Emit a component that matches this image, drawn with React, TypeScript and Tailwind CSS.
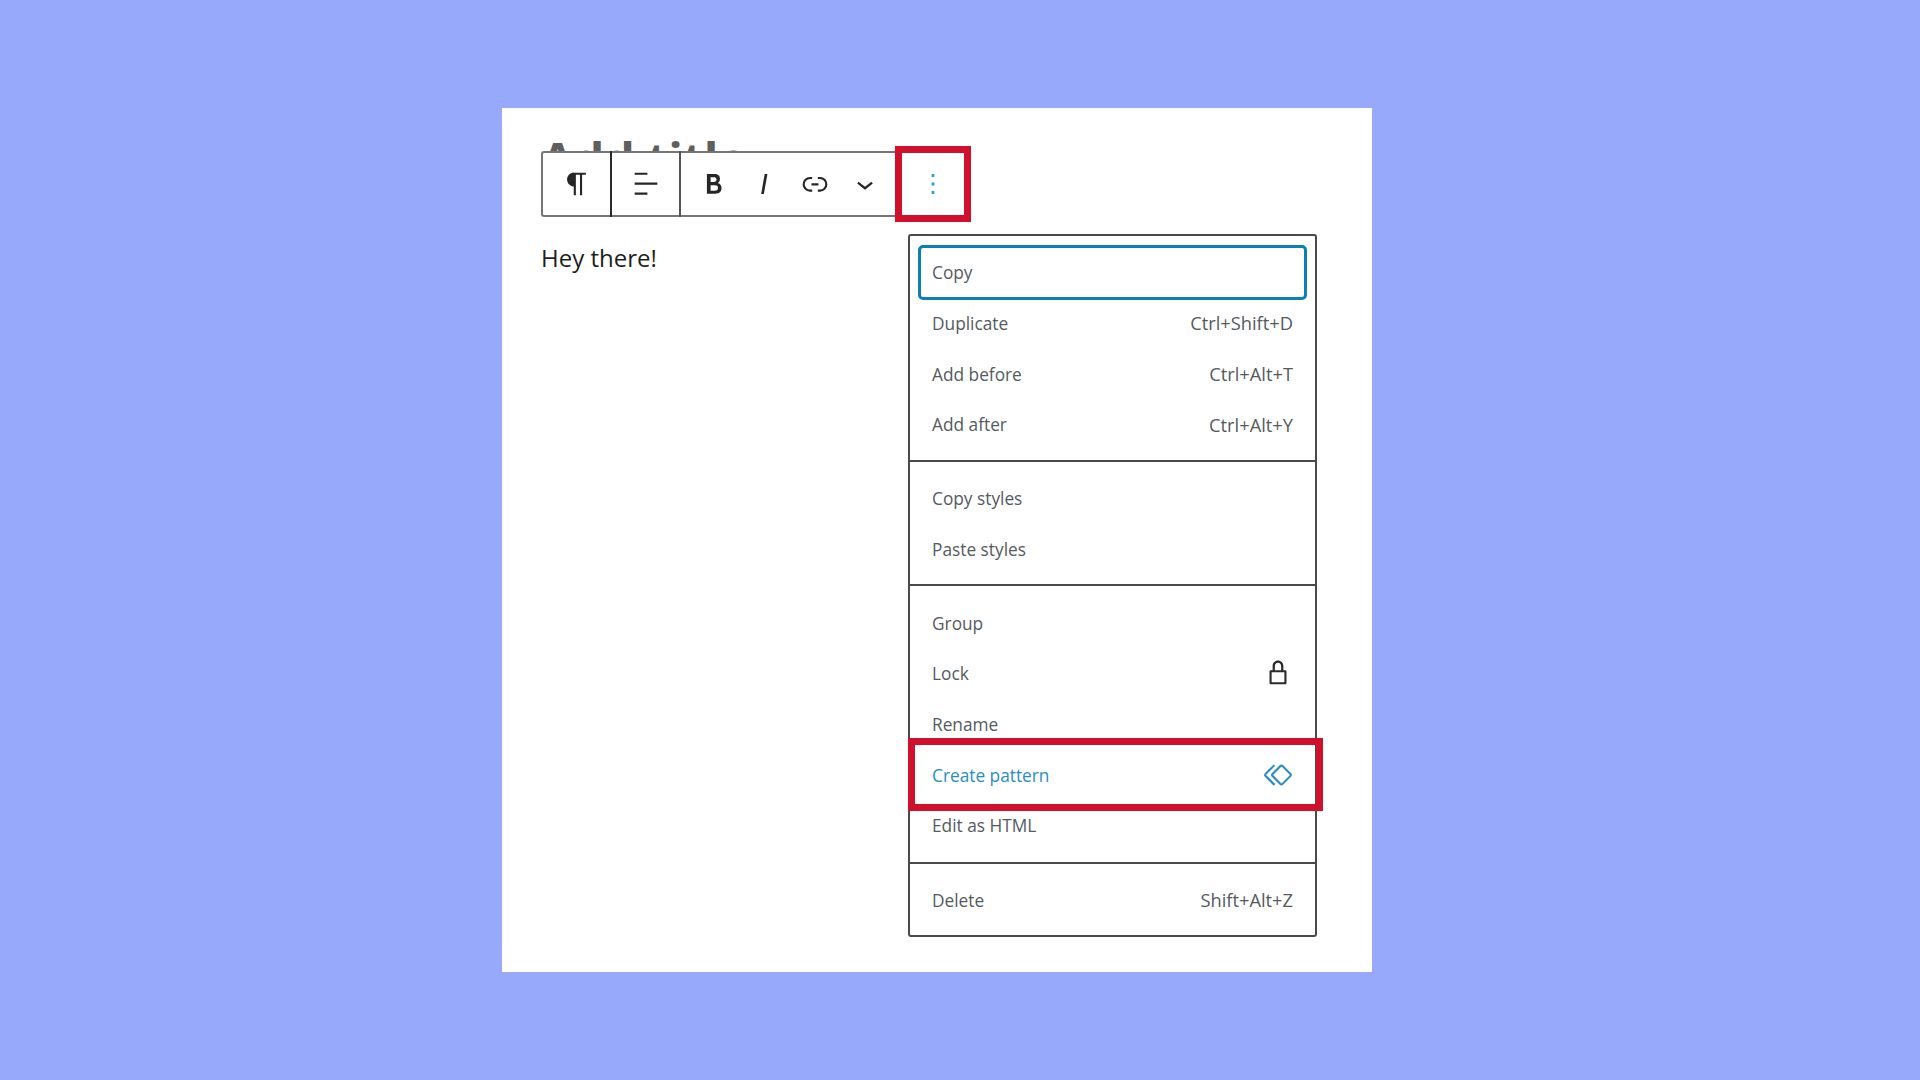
const P = ({ d, className }: { d: string; className: string }) => (
  <svg viewBox="0 0 24 24" className={className} fill="currentColor">
    <path d={d} />
  </svg>
);

const icons = {
  para: "M18.3 4H9.9v-.1l-.9.2c-2.3.4-4 2.4-4 4.8s1.7 4.4 4 4.8l.7.1V20h1.5V5.5h2.9V20h1.5V5.5h2.7V4z",
  align: "M13 5.5H4V4h9v1.5Zm7 7H4V11h16v1.5Zm-7 7H4V18h9v1.5Z",
  bold: "M14.7 11.3c1-.6 1.5-1.6 1.5-3 0-2.3-1.3-3.4-4-3.4H7v14h5.8c1.4 0 2.5-.3 3.3-1 .8-.7 1.2-1.7 1.2-2.9.1-1.9-.8-3.1-2.6-3.7zm-5.1-4h2.3c.6 0 1.1.1 1.4.4.3.3.5.7.5 1.2s-.2 1-.5 1.2c-.3.3-.8.4-1.4.4H9.6V7.3zm4.6 9c-.4.3-1 .4-1.7.4H9.6v-3.9h2.9c.7 0 1.3.2 1.7.5.4.3.6.8.6 1.5s-.2 1.2-.6 1.5z",
  italic: "M12.5 5L10 19h1.9l2.5-14z",
  link: "M10 17.389H8.444A5.194 5.194 0 1 1 8.444 7H10v1.5H8.444a3.694 3.694 0 0 0 0 7.389H10v1.5ZM14 7h1.556a5.194 5.194 0 0 1 0 10.39H14v-1.5h1.556a3.694 3.694 0 0 0 0-7.39H14V7Zm-4.5 6h5v-1.5h-5V13Z",
  chevron: "M17.5 11.6L12 16l-5.5-4.4.9-1.2L12 14l4.5-3.6 1 1.2z",
  more: "M13 19h-2v-2h2v2zm0-6h-2v-2h2v2zm0-6h-2V5h2v2z",
  lock: "M17 10h-1.2V7c0-2.1-1.7-3.8-3.8-3.8-2.1 0-3.8 1.7-3.8 3.8v3H7c-.6 0-1 .4-1 1v8c0 .6.4 1 1 1h10c.6 0 1-.4 1-1v-8c0-.6-.4-1-1-1zM9.8 7c0-1.2 1-2.2 2.2-2.2 1.2 0 2.2 1 2.2 2.2v3H9.8V7zm6.7 11.5h-9v-7h9v7z",
  symbol: "M21.3 10.8l-5.6-5.6c-.7-.7-1.8-.7-2.5 0l-5.6 5.6c-.7.7-.7 1.8 0 2.5l5.6 5.6c.3.3.8.5 1.2.5s.9-.2 1.2-.5l5.6-5.6c.8-.7.8-1.9.1-2.5zm-1 1.4l-5.6 5.6c-.1.1-.3.1-.4 0l-5.6-5.6c-.1-.1-.1-.3 0-.4l5.6-5.6s.1-.1.2-.1.1 0 .2.1l5.6 5.6c.1.1.1.3 0 .4zm-16.6-.4L10 5.5l-1-1-6.3 6.3c-.7.7-.7 1.8 0 2.5L9 19.5l1.1-1.1-6.3-6.3c-.2 0-.2-.2-.1-.3z",
};

const Row = ({ label, hint, icon }: { label: string; hint?: string; icon?: string }) => (
  <div className="flex h-[50.7px] items-center justify-between pl-[22px] pr-[22px] text-[#555a5f]">
    <span className="pt-[2px] text-[17.3px]">{label}</span>
    {hint && <span className="text-[18.3px]">{hint}</span>}
    {icon && <P d={icon} className="mr-[-2px] h-[34px] w-[34px] text-[#2c2c2c]" />}
  </div>
);

export default function App() {
  return (
    <div className="flex h-[1080px] w-[1920px] items-center justify-center bg-[#96a9fa] font-['Open_Sans','Noto_Sans',sans-serif]">
      <div className="mr-[46px] h-[864px] w-[870px] bg-white pl-[39px] pt-[30px]">
        <div className="h-[13px] overflow-hidden text-[48px] font-bold leading-[43px] text-[#5f5f5f]">Add title</div>

        <div className="flex items-center">
          <div className="flex h-[66px] w-[354px] items-center rounded-l-[3px] border-y-2 border-l-2 border-[#757575] text-[#262626]">
            <div className="flex h-[66px] w-[69px] shrink-0 items-center justify-center border-r-2 border-[#2b2b2b]">
              <P d={icons.para} className="h-[34px] w-[34px]" />
            </div>
            <div className="flex h-[66px] w-[69px] shrink-0 items-center justify-center border-r-2 border-[#555]">
              <P d={icons.align} className="h-[34px] w-[34px]" />
            </div>
            <div className="ml-[16px] flex items-center">
              <P d={icons.bold} className="h-[34px] w-[34px]" />
              <P d={icons.italic} className="ml-[16px] h-[34px] w-[34px]" />
              <P d={icons.link} className="ml-[17px] h-[34px] w-[34px]" />
              <P d={icons.chevron} className="ml-[16px] h-[34px] w-[34px]" />
            </div>
          </div>
          <div className="my-[-5px] flex h-[76px] w-[76px] items-center justify-center border-[7px] border-[#d1112b] bg-white text-[#2b9fd0]">
            <P d={icons.more} className="h-[34px] w-[34px]" />
          </div>
        </div>

        <div className="mt-[17px] flex items-start">
          <div className="mt-[7px] w-[367px] text-[24px] leading-[34px] text-[#1e1e1e]">Hey there!</div>

          <div className="relative w-[409px] rounded-[3px] border-2 border-[#4a4a4a] bg-white">
            <div className="pb-[10px] pt-[11px]">
              <div className="relative">
                <div className="absolute inset-x-[8px] inset-y-[-2px] rounded-[5px] border-[3px] border-[#0a7fb8]" />
                <Row label="Copy" />
              </div>
              <Row label="Duplicate" hint="Ctrl+Shift+D" />
              <Row label="Add before" hint="Ctrl+Alt+T" />
              <Row label="Add after" hint="Ctrl+Alt+Y" />
            </div>
            <div className="border-t-2 border-[#4a4a4a] pb-[10px] pt-[11px]">
              <Row label="Copy styles" />
              <Row label="Paste styles" />
            </div>
            <div className="border-t-2 border-[#4a4a4a] py-[11px]">
              <Row label="Group" />
              <Row label="Lock" icon={icons.lock} />
              <Row label="Rename" />
              <div className="flex h-[50.7px] items-center justify-between pl-[22px] pr-[22px] text-[17.3px] text-[#2a8dc2]">
                <span className="pt-[2px]">Create pattern</span>
                <P d={icons.symbol} className="mr-[-2px] h-[34px] w-[34px] text-[#2a8dc2]" />
              </div>
              <Row label="Edit as HTML" />
            </div>
            <div className="border-t-2 border-[#4a4a4a] pb-[10px] pt-[11px]">
              <Row label="Delete" hint="Shift+Alt+Z" />
            </div>
            <div className="pointer-events-none absolute left-[-2px] right-[-8px] top-[502px] h-[73px] border-[7px] border-[#d1112b]" />
          </div>
        </div>
      </div>
    </div>
  );
}
